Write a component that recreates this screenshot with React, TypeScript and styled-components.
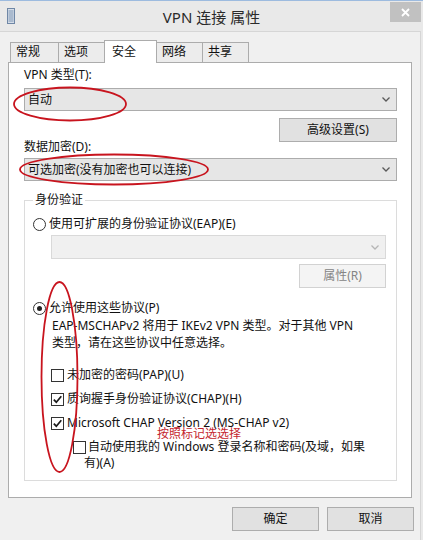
import React from 'react';
import styled, { createGlobalStyle } from 'styled-components';

const uiFont = '"Noto Sans", "Noto Sans CJK SC", sans-serif';

const GlobalStyle = createGlobalStyle`
  html, body {
    margin: 0;
    padding: 0;
    background: #e9e9e9;
    overflow: hidden;
  }
  body {
    font-family: ${uiFont};
    font-size: 12px;
    color: #111;
  }
`;

const Window = styled.div`
  position: relative;
  width: 423px;
  height: 540px;
  box-sizing: border-box;
  display: flex;
  flex-direction: column;
  background: #e9e9e9;
  border-top: 1px solid #9dbbdf;
`;

const TitleBar = styled.div`
  height: 30px;
  display: grid;
  grid-template-columns: 1fr auto 1fr;
  align-items: center;
`;

const Title = styled.div`
  font-size: 15px;
  line-height: 20px;
  color: #2a2a2a;
  margin-top: 1px;
`;

const CloseButton = styled.div`
  justify-self: end;
  align-self: start;
  width: 31px;
  height: 20px;
  margin-top: 1px;
  margin-right: 2px;
  background: #c1c1c1;
  display: flex;
  align-items: center;
  justify-content: center;
`;

const Client = styled.div`
  flex: 1;
  display: flex;
  flex-direction: column;
  margin-right: 2px;
  padding: 8px 8px 0 8px;
  background: #f0f0f0;
  border-top: 1px solid #d6d6d6;
  border-right: 1px solid #d6d6d6;
`;

const TabStrip = styled.div`
  display: flex;
  align-items: flex-end;
  height: 22px;
  margin-left: 2px;
  position: relative;
  z-index: 1;
`;

const Tab = styled.div<{ $active?: boolean; $w: number }>`
  box-sizing: border-box;
  width: ${(p) => p.$w}px;
  height: ${(p) => (p.$active ? 23 : 20)}px;
  margin-bottom: ${(p) => (p.$active ? -1 : 0)}px;
  margin-left: -1px;
  &:first-child {
    margin-left: 0;
  }
  padding: ${(p) => (p.$active ? '3px 0 0 7px' : '1px 0 0 5px')};
  line-height: 16px;
  background: ${(p) => (p.$active ? '#ffffff' : '#ececec')};
  border: 1px solid #acacac;
  border-bottom: none;
  position: relative;
  z-index: ${(p) => (p.$active ? 2 : 1)};
`;

const Panel = styled.div`
  box-sizing: border-box;
  height: 436px;
  background: #ffffff;
  border: 1px solid #acacac;
  padding: 0 14px 0 15px;
  display: flex;
  flex-direction: column;
`;

const FieldLabel = styled.div<{ $mt: number }>`
  line-height: 16px;
  margin-top: ${(p) => p.$mt}px;
`;

const Combo = styled.div<{ $disabled?: boolean; $mt: number }>`
  box-sizing: border-box;
  height: ${(p) => (p.$disabled ? 24 : 23)}px;
  margin-top: ${(p) => p.$mt}px;
  display: flex;
  align-items: center;
  justify-content: space-between;
  padding: 0 6px 0 3px;
  background: ${(p) => (p.$disabled ? '#f0f0f0' : '#e6e6e6')};
  border: 1px solid ${(p) => (p.$disabled ? '#d9d9d9' : '#acacac')};
  line-height: 16px;
`;

const Button = styled.div<{ $disabled?: boolean; $w: number; $h?: number }>`
  box-sizing: border-box;
  width: ${(p) => p.$w}px;
  height: ${(p) => p.$h ?? 24}px;
  display: flex;
  align-items: center;
  justify-content: center;
  line-height: 16px;
  background: ${(p) => (p.$disabled ? '#f4f4f4' : '#e1e1e1')};
  border: 1px solid ${(p) => (p.$disabled ? '#d2d2d2' : '#adadad')};
  color: ${(p) => (p.$disabled ? '#858585' : '#111')};
`;

const ButtonRow = styled.div<{ $mt: number }>`
  display: flex;
  justify-content: flex-end;
  gap: 8px;
  margin-top: ${(p) => p.$mt}px;
`;

const GroupBox = styled.fieldset`
  margin: 13px 0 0 0;
  padding: 10px 10px 9px 8px;
  border: 1px solid #dcdcdc;
  min-width: 0;
  display: flex;
  flex-direction: column;
`;

const Legend = styled.legend`
  padding: 0 2px;
  margin-left: 0;
  line-height: 12px;
`;

const OptionRow = styled.div<{ $mt?: number; $indent?: number }>`
  display: flex;
  align-items: center;
  gap: 3px;
  line-height: 16px;
  margin-top: ${(p) => p.$mt ?? 0}px;
  margin-left: ${(p) => p.$indent ?? 0}px;
  white-space: nowrap;
`;

const Radio = styled.span<{ $checked?: boolean }>`
  box-sizing: border-box;
  width: 13px;
  height: 13px;
  flex: none;
  border-radius: 50%;
  border: 1px solid #333;
  background: #fff;
  display: flex;
  align-items: center;
  justify-content: center;
  &::after {
    content: '';
    display: ${(p) => (p.$checked ? 'block' : 'none')};
    width: 5px;
    height: 5px;
    border-radius: 50%;
    background: #222;
  }
`;

const Box = styled.span`
  box-sizing: border-box;
  width: 13px;
  height: 13px;
  flex: none;
  border: 1px solid #333;
  background: #fff;
  display: flex;
  align-items: center;
  justify-content: center;
`;

const Description = styled.div`
  margin: 1px 0 0 19px;
  line-height: 17px;
  white-space: nowrap;
`;

const CheckList = styled.div`
  display: flex;
  flex-direction: column;
  gap: 8px;
  margin: 16px 0 0 18px;
`;

const WrapRow = styled.div`
  display: flex;
  align-items: flex-start;
  margin-left: 22px;
  line-height: 16px;
`;

const WrapBox = styled(Box)`
  margin-top: 2px;
`;

const WrapText = styled.div`
  margin-left: -2px;
  text-indent: 4px;
  white-space: nowrap;
`;

const Footer = styled(ButtonRow)`
  margin-right: -2px;
`;

const Overlay = styled.svg`
  position: absolute;
  left: 0;
  top: 0;
  pointer-events: none;
  z-index: 5;
`;

const Note = styled.span`
  position: absolute;
  left: 157px;
  top: 425px;
  line-height: 16px;
  font-size: 12px;
  color: #c4262e;
  z-index: 5;
  white-space: nowrap;
`;

const Chevron = ({ color = '#5a5a5a' }: { color?: string }) => (
  <svg width="8" height="5" viewBox="0 0 8 5">
    <path d="M0.5 0.5 L4 4 L7.5 0.5" fill="none" stroke={color} strokeWidth="1.3" />
  </svg>
);

const Check = () => (
  <svg width="11" height="11" viewBox="0 0 11 11">
    <path d="M1.8 5.6 L4.3 8.2 L9.3 2.2" fill="none" stroke="#1a1a1a" strokeWidth="1.7" />
  </svg>
);

const CheckBox = ({ checked }: { checked?: boolean }) => <Box>{checked && <Check />}</Box>;

const AppIcon = () => (
  <svg width="9" height="17" viewBox="0 0 9 17" style={{ marginLeft: 7, marginTop: 1 }}>
    <rect x="0.5" y="0.5" width="7" height="15" fill="#d5dde8" stroke="#6f87a6" />
    {[3, 5, 7, 9, 11, 13].map((y) => (
      <line key={y} x1="1.5" x2="6.5" y1={y} y2={y} stroke="#7f97b5" strokeWidth="1" />
    ))}
  </svg>
);

const tabs = [
  { label: '常规', w: 49 },
  { label: '选项', w: 47 },
  { label: '安全', w: 53, active: true },
  { label: '网络', w: 47 },
  { label: '共享', w: 47 },
];

export default function App() {
  return (
    <>
      <GlobalStyle />
      <Window>
        <TitleBar>
          <AppIcon />
          <Title>VPN 连接 属性</Title>
          <CloseButton>
            <svg width="9" height="9" viewBox="0 0 9 9">
              <path d="M1 1 L8 8 M8 1 L1 8" stroke="#fff" strokeWidth="1.8" />
            </svg>
          </CloseButton>
        </TitleBar>

        <Client>
          <TabStrip>
            {tabs.map((t) => (
              <Tab key={t.label} $w={t.w} $active={t.active}>
                {t.label}
              </Tab>
            ))}
          </TabStrip>

          <Panel>
            <FieldLabel $mt={4}>VPN 类型(T):</FieldLabel>
            <Combo $mt={5}>
              <span>自动</span>
              <Chevron />
            </Combo>
            <ButtonRow $mt={7}>
              <Button $w={118}>高级设置(S)</Button>
            </ButtonRow>
            <FieldLabel $mt={-3}>数据加密(D):</FieldLabel>
            <Combo $mt={3}>
              <span>可选加密(没有加密也可以连接)</span>
              <Chevron />
            </Combo>

            <GroupBox>
              <Legend>身份验证</Legend>
              <OptionRow>
                <Radio />
                <span>使用可扩展的身份验证协议(EAP)(E)</span>
              </OptionRow>
              <Combo $disabled $mt={3} style={{ marginLeft: 18 }}>
                <span />
                <Chevron color="#b5b5b5" />
              </Combo>
              <ButtonRow $mt={5}>
                <Button $disabled $w={87}>属性(R)</Button>
              </ButtonRow>
              <OptionRow $mt={12}>
                <Radio $checked />
                <span>允许使用这些协议(P)</span>
              </OptionRow>
              <Description>
                EAP-MSCHAPv2 将用于 IKEv2 VPN 类型。对于其他 VPN
                <br />
                类型，请在这些协议中任意选择。
              </Description>
              <CheckList>
                <OptionRow>
                  <CheckBox />
                  <span>未加密的密码(PAP)(U)</span>
                </OptionRow>
                <OptionRow>
                  <CheckBox checked />
                  <span>质询握手身份验证协议(CHAP)(H)</span>
                </OptionRow>
                <OptionRow>
                  <CheckBox checked />
                  <span>Microsoft CHAP Version 2 (MS-CHAP v2)</span>
                </OptionRow>
                <WrapRow>
                  <WrapBox />
                  <WrapText>
                    自动使用我的 Windows 登录名称和密码(及域，如果
                    <br />
                    有)(A)
                  </WrapText>
                </WrapRow>
              </CheckList>
            </GroupBox>
          </Panel>

          <Footer $mt={9}>
            <Button $w={87}>确定</Button>
            <Button $w={87}>取消</Button>
          </Footer>
        </Client>

        <Overlay width="423" height="540" viewBox="0 0 423 540">
          <ellipse cx="70" cy="103" rx="56" ry="16.5" fill="none" stroke="#c8141e" strokeWidth="1.8" />
          <ellipse cx="114" cy="168.5" rx="94" ry="15" fill="none" stroke="#c8141e" strokeWidth="1.8" />
          <ellipse cx="59.5" cy="376" rx="18" ry="95" fill="none" stroke="#c8141e" strokeWidth="1.8" />
        </Overlay>
        <Note>按照标记选选择</Note>
      </Window>
    </>
  );
}
